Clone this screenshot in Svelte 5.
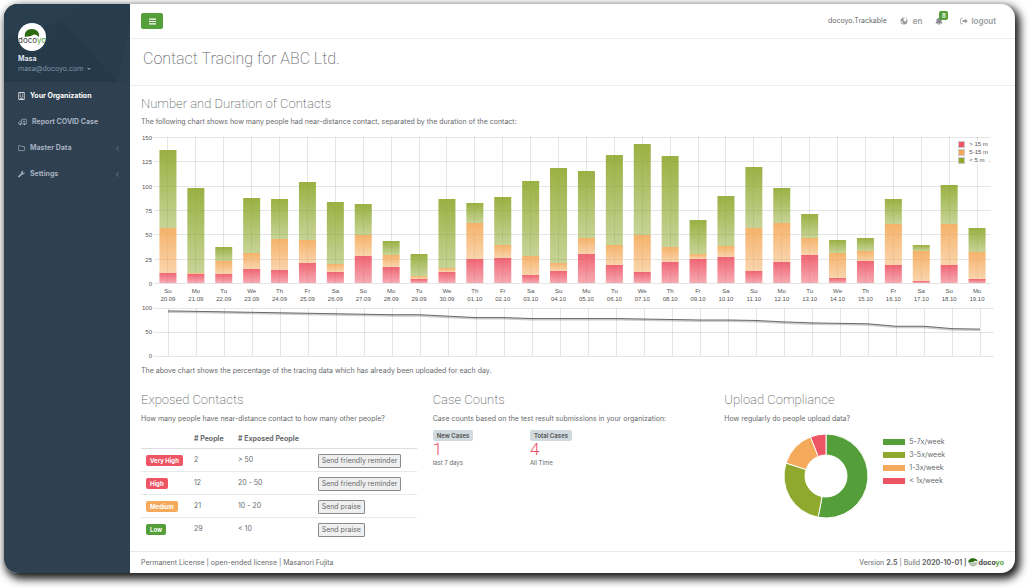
<script lang="ts">
    type Slice = { label: string, value: number, color: string };

    const days = ["Su", "Mo", "Tu", "We", "Th", "Fr", "Sa"];

    // [top of < 5 m, top of 5-15 m, top of > 15 m], one entry per day
    const contacts: number[][] = [
        [137, 56, 10], [98, 10, 9], [37, 23, 9], [87, 31, 14], [86, 45, 13],
        [104, 44, 21], [83, 20, 11], [81, 49, 28], [43, 29, 16], [30, 7, 4],
        [86, 15, 11], [82, 62, 25], [88, 39, 26], [105, 28, 8], [118, 21, 12],
        [115, 46, 30], [132, 39, 18], [143, 49, 11], [130, 37, 22], [65, 30, 25],
        [89, 38, 27], [119, 56, 12], [98, 62, 22], [71, 46, 29], [44, 31, 5],
        [46, 33, 23], [86, 61, 19], [39, 33, 2], [101, 61, 18], [56, 32, 4]
    ];

    const uploaded = [
        94, 93, 92, 91, 90, 89, 88, 87, 86, 86, 83, 80, 80, 78, 78,
        78, 78, 77, 76, 75, 75, 74, 71, 69, 68, 67, 62, 62, 57, 56
    ];

    const series = [
        { label: "< 5 m", id: "short" },
        { label: "5-15 m", id: "medium" },
        { label: "> 15 m", id: "long" }
    ];

    const exposed = [
        { level: "Very High", kind: "danger", people: 2, range: "> 50", action: "Send friendly reminder" },
        { level: "High", kind: "danger", people: 12, range: "20 - 50", action: "Send friendly reminder" },
        { level: "Medium", kind: "warning", people: 21, range: "10 - 20", action: "Send praise" },
        { level: "Low", kind: "primary", people: 29, range: "< 10", action: "Send praise" }
    ];

    const compliance: Slice[] = [
        { label: "5-7x/week", value: 53, color: "#549f39" },
        { label: "3-5x/week", value: 27, color: "#8fa82e" },
        { label: "1-3x/week", value: 14, color: "#f4aa5a" },
        { label: "< 1x/week", value: 6, color: "#ed5565" }
    ];

    let width = $state(859);

    const left = 13;
    const barWidth = 17;
    let step = $derived((width - left - 9) / contacts.length);
    let lineStep = $derived((width - left - 6) / contacts.length);

    const barY = (value: number) => 151 - Math.round(value * 146 / 150);
    const lineY = (value: number) => 53 - value * 48 / 100;
    const center = (i: number) => left + step * (i + 0.5);
    const lineX = (i: number) => left + lineStep * (i + 0.5);

    const dateLabel = (i: number) => {
        const d = new Date(2020, 8, 20 + i);
        const pad = (n: number) => String(n).padStart(2, "0");
        return pad(d.getDate()) + "." + pad(d.getMonth() + 1);
    }

    const point = (share: number, r: number) => {
        const a = share * Math.PI * 2 / 100;
        return (42 + r * Math.sin(a)) + " " + (42 - r * Math.cos(a));
    }

    const slicePath = (i: number) => {
        const from = compliance.slice(0, i).reduce((sum, s) => sum + s.value, 0);
        const to = from + compliance[i].value;
        const large = to - from > 50 ? 1 : 0;
        return `M${point(from, 42)}A42 42 0 ${large} 1 ${point(to, 42)}L${point(to, 21)}A21 21 0 ${large} 0 ${point(from, 21)}Z`;
    }
</script>

{#snippet hat()}
    <path d="M1 13C0 5 6 0 15 0s14 5 14 11c-4-4-8-4-12-1-5 3-10 1-16 3z" fill="#2c6a10" />
{/snippet}

<div class="window">
    <nav class="sidebar">
        <div class="profile">
            <svg class="facets" viewBox="0 0 125 78" preserveAspectRatio="none" aria-hidden="true">
                <path d="M0 0h80L57 17 0 36z" fill="#293e4e" />
                <path d="M57 17 112 78H30z" fill="#243949" />
                <path d="M80 0h45v62l-13 16L57 17z" fill="#273c4c" />
                <path d="M125 20v58h-13z" fill="#2a3f4f" />
            </svg>
            <svg class="avatar" viewBox="0 0 28 28" role="img" aria-label="docoyo">
                <defs><clipPath id="round"><circle cx="14" cy="14" r="14" /></clipPath></defs>
                <g clip-path="url(#round)">
                    <rect width="28" height="28" fill="#fff" />
                    <path d="M7 14C6 9 9 6 14 6s8 4 7 8c-2-2-4-3-6-2-3 2-5 1-8 2z" fill="#2c6a10" />
                    <text x="14" y="20" text-anchor="middle" class="avatar-text">doco<tspan fill="#549f39">yo</tspan></text>
                </g>
            </svg>
            <strong>Masa</strong>
            <a href="#profile">masa@docoyo.com <span class="caret"></span></a>
        </div>
        <ul>
            <li class="active">
                <a href="#organization">
                    <svg class="icon" viewBox="0 0 14 16"><path d="M1.5 1h11v14h-11zM5.5 15v-3h3v3" /><path d="M4 4h1.5M8.500 4H10M4 6.500h1.500M8.500 6.500H10M4 9h1.500M8.500 9H10" /></svg>
                    Your Organization
                </a>
            </li>
            <li>
                <a href="#report">
                    <svg class="icon wide" viewBox="0 0 20 16"><path d="M8 2h11v10H8zM8 6H4L1.500 9v3H8" /><circle cx="5" cy="13" r="2" fill="currentColor" stroke="none" /><circle cx="14.500" cy="13" r="2" fill="currentColor" stroke="none" /><path d="M13.500 4.500v5M11 7h5" /></svg>
                    Report COVID Case
                </a>
            </li>
            <li>
                <a href="#master">
                    <svg class="icon" viewBox="0 0 16 16"><path d="M1 3.500q0-1 1-1h4l1.500 2H14q1 0 1 1V13q0 1-1 1H2q-1 0-1-1z" /></svg>
                    Master Data
                    <svg class="angle" viewBox="0 0 6 10"><path d="M5 1 1 5l4 4" /></svg>
                </a>
            </li>
            <li>
                <a href="#settings">
                    <svg class="icon" viewBox="0 0 16 16"><path d="M15.500 4.200 12.800 6 10.500 4.800V2.700L13.200 1a4.600 4.600 0 0 0-6 5.600L.8 12.800a1.700 1.700 0 0 0 2.400 2.400L9.600 9a4.600 4.600 0 0 0 5.900-4.800z" fill="currentColor" stroke="none" /></svg>
                    Settings
                    <svg class="angle" viewBox="0 0 6 10"><path d="M5 1 1 5l4 4" /></svg>
                </a>
            </li>
        </ul>
    </nav>

    <div class="page">
        <header>
            <button class="toggle" aria-label="Toggle menu">
                <svg viewBox="0 0 12 12"><path d="M0 2h12M0 6h12M0 10h12" stroke="#fff" stroke-width="2" /></svg>
            </button>
            <div class="top-links">
                <span>docoyo.Trackable</span>
                <a class="lang" href="#language">
                    <svg viewBox="0 0 16 16"><circle cx="8" cy="8" r="7" fill="#999c9e" /><path d="M7 2.500 11 2l3 4-2 1-1 3-2-2-2-2zM2 8l3 1.500L6.500 13 4 12.500z" fill="#fff" /></svg>
                    en
                </a>
                <a class="bell" href="#notifications" aria-label="Notifications">
                    <svg viewBox="0 0 16 16"><path d="M8 1c1 0 1 1 1 1 3 .6 4 3 4 5 0 3 1 4.500 2.500 6H.5C2 11.500 3 10 3 7c0-2 1-4.400 4-5 0 0 0-1 1-1zM6 13.500h4a2 2 0 0 1-4 0z" fill="#8a8d90" /></svg>
                    <span class="count">8</span>
                </a>
                <a class="logout" href="#logout">
                    <svg viewBox="0 0 16 16"><path d="M6 2.500H3q-2 0-2 2v7q0 2 2 2h3" fill="none" stroke="#999c9e" stroke-width="1.500" /><path d="M5 6h5V3l5.500 5-5.500 5v-3H5z" fill="#999c9e" /></svg>
                    logout
                </a>
            </div>
        </header>

        <div class="heading">
            <h1>Contact Tracing for ABC Ltd.</h1>
        </div>

        <main>
            <section>
                <h2>Number and Duration of Contacts</h2>
                <p>The following chart shows how many people had near-distance contact, separated by the duration of the contact:</p>

                <div class="charts" bind:clientWidth={width}>
                    <svg width={width} height="171" role="img" aria-label="Contacts per day">
                        <defs>
                            <linearGradient id="short" x2="0" y2="1"><stop stop-color="#8fa82e" stop-opacity="0.9" /><stop offset="1" stop-color="#8fa82e" stop-opacity="0.5" /></linearGradient>
                            <linearGradient id="medium" x2="0" y2="1"><stop stop-color="#f4aa5a" stop-opacity="0.9" /><stop offset="1" stop-color="#f4aa5a" stop-opacity="0.5" /></linearGradient>
                            <linearGradient id="long" x2="0" y2="1"><stop stop-color="#ed5565" stop-opacity="0.9" /><stop offset="1" stop-color="#ed5565" stop-opacity="0.5" /></linearGradient>
                        </defs>
                        {#each [0, 25, 50, 75, 100, 125, 150] as tick}
                            <line class="grid" x1={left} x2={width - 9} y1={barY(tick)} y2={barY(tick)} />
                            <text class="tick" x="11" y={barY(tick) + 3} text-anchor="end">{tick}</text>
                        {/each}
                        {#each contacts as tops, i}
                            <line class="grid" x1={center(i)} x2={center(i)} y1="5" y2="151" />
                            {#each series as s, k}
                                <rect
                                    x={center(i) - barWidth / 2}
                                    y={barY(tops[k])}
                                    width={barWidth}
                                    height={barY(tops[k + 1] ?? 0) - barY(tops[k])}
                                    fill="url(#{s.id})" />
                            {/each}
                            <text class="tick" x={center(i)} y="161" text-anchor="middle">{days[i % 7]}</text>
                            <text class="tick" x={center(i)} y="169" text-anchor="middle">{dateLabel(i)}</text>
                        {/each}
                    </svg>

                    <ul class="legend">
                        {#each [...series].reverse() as s}
                            <li><span class="swatch {s.id}"></span>{s.label}</li>
                        {/each}
                    </ul>

                    <svg width={width} height="58" role="img" aria-label="Uploaded tracing data in percent">
                        {#each [0, 50, 100] as tick}
                            <line class="grid" x1={left} x2={width - 6} y1={lineY(tick)} y2={lineY(tick)} />
                            <text class="tick" x="11" y={lineY(tick) + 2} text-anchor="end">{tick}</text>
                        {/each}
                        {#each uploaded as _, i}
                            <line class="grid" x1={lineX(i)} x2={lineX(i)} y1="5" y2="53" />
                        {/each}
                        <polyline class="shade" points={uploaded.map((v, i) => lineX(i) + "," + (lineY(v) + 1)).join(" ")} />
                        <polyline class="line" points={uploaded.map((v, i) => lineX(i) + "," + lineY(v)).join(" ")} />
                    </svg>
                </div>

                <p>The above chart shows the percentage of the tracing data which has already been uploaded for each day.</p>
            </section>

            <div class="columns">
                <section>
                    <h2>Exposed Contacts</h2>
                    <p>How many people have near-distance contact to how many other people?</p>
                    <table>
                        <thead>
                            <tr><th class="level" aria-label="Level"></th><th class="people"># People</th><th># Exposed People</th><th aria-label="Action"></th></tr>
                        </thead>
                        <tbody>
                            {#each exposed as row}
                                <tr>
                                    <td><span class="label {row.kind}">{row.level}</span></td>
                                    <td>{row.people}</td>
                                    <td>{row.range}</td>
                                    <td class="action"><button>{row.action}</button></td>
                                </tr>
                            {/each}
                        </tbody>
                    </table>
                </section>

                <section>
                    <h2>Case Counts</h2>
                    <p>Case counts based on the test result submissions in your organization:</p>
                    <div class="cases">
                        <div>
                            <span class="label plain">New Cases</span>
                            <div class="number">1</div>
                            <small>last 7 days</small>
                        </div>
                        <div>
                            <span class="label plain">Total Cases</span>
                            <div class="number">4</div>
                            <small>All Time</small>
                        </div>
                    </div>
                </section>

                <section>
                    <h2>Upload Compliance</h2>
                    <p>How regularly do people upload data?</p>
                    <div class="compliance">
                        <svg viewBox="0 0 84 84" role="img" aria-label="Upload compliance">
                            {#each compliance as slice, i}
                                <path d={slicePath(i)} fill={slice.color} stroke="#fff" />
                            {/each}
                        </svg>
                        <ul>
                            {#each compliance as slice}
                                <li><span style="background-color: {slice.color}"></span>{slice.label}</li>
                            {/each}
                        </ul>
                    </div>
                </section>
            </div>
        </main>

        <footer>
            <span>Permanent License | open-ended license | Masanori Fujita</span>
            <span class="version">
                <span>Version <b>2.5</b> | Build <b>2020-10-01 |</b></span>
                <svg viewBox="0 0 30 26" aria-hidden="true">
                    <path d="M2 12h27q0 6-5 10-9 6-17 0-4-3-5-10z" fill="#b9c2b0" />
                    {@render hat()}
                </svg>
                <b class="brand">doco<i>yo</i></b>
            </span>
        </footer>
    </div>
</div>

<style>
    :global(body) {
        margin: 0;
        background: #fff;
    }

    .window {
        display: flex;
        min-height: calc(100vh - 19px);
        margin: 4px 15px 15px 4px;
        border-radius: 14px;
        overflow: hidden;
        box-shadow: 3px 4px 8px 2px rgba(0, 0, 0, 0.9);
        background: #fff;
        color: #676a6c;
        font: 7px/10px Inter, "Liberation Sans", sans-serif;
    }

    a {
        color: inherit;
        text-decoration: none;
    }

    ul {
        margin: 0;
        padding: 0;
        list-style: none;
    }

    .sidebar {
        flex: none;
        width: 126px;
        background: #2f4050;
        color: #a7b1c2;
    }

    .sidebar ul {
        padding-top: 1px;
    }

    .profile {
        position: relative;
        display: flex;
        flex-direction: column;
        align-items: flex-start;
        box-sizing: border-box;
        height: 78px;
        padding: 19px 14px 0;
        background: #263b4a;
        color: #8095a8;
    }

    .profile > * {
        position: relative;
    }

    .profile .facets {
        position: absolute;
        inset: 0;
        width: 100%;
        height: 100%;
    }

    .avatar {
        width: 28px;
        height: 28px;
        margin-bottom: 3px;
    }

    .avatar-text {
        font-size: 8px;
        fill: #444;
    }

    .profile strong {
        color: #dfe4ed;
    }

    .caret {
        display: inline-block;
        margin-left: 2px;
        border: 2px solid transparent;
        border-top-color: currentColor;
        border-bottom: 0;
        vertical-align: middle;
    }

    .sidebar li a {
        display: flex;
        align-items: center;
        gap: 5px;
        height: 26px;
        padding: 0 11px 0 14px;
        font-weight: 700;
    }

    .sidebar .active {
        color: #fff;
    }

    .icon {
        width: 7px;
        height: 8px;
        fill: none;
        stroke: currentColor;
        stroke-width: 1.5;
    }

    .icon.wide {
        width: 9px;
    }

    .angle {
        width: 3px;
        height: 5px;
        margin-left: auto;
        fill: none;
        stroke: currentColor;
    }

    .page {
        display: flex;
        flex: 1;
        flex-direction: column;
        min-width: 0;
    }

    header {
        display: flex;
        align-items: center;
        justify-content: space-between;
        height: 34px;
        padding: 0 19px 0 11px;
        border-bottom: 1px solid #eceeef;
    }

    .toggle {
        width: 22px;
        height: 16px;
        padding: 0;
        border: 0;
        border-radius: 2px;
        background: #549f39;
        line-height: 0;
    }

    .toggle svg {
        width: 7px;
        height: 7px;
    }

    .top-links,
    .top-links a {
        display: flex;
        align-items: center;
    }

    .top-links {
        gap: 13px;
    }

    .top-links a {
        gap: 5px;
        color: #999c9e;
        font-size: 8px;
        font-weight: 600;
    }

    .top-links svg {
        width: 8px;
        height: 8px;
    }

    .top-links .bell {
        position: relative;
        margin-right: 4px;
    }

    .top-links .logout {
        gap: 3px;
    }

    .count {
        position: absolute;
        top: -6px;
        left: 4px;
        width: 9px;
        border-radius: 2px;
        background: #549f39;
        color: #fff;
        font-size: 6px;
        line-height: 9px;
        text-align: center;
    }

    .heading {
        padding: 8px 13px 14px;
        border-bottom: 1px solid #eceeef;
    }

    h1,
    h2 {
        margin: 0;
        font-family: Roboto, "Liberation Sans", sans-serif;
        font-weight: 200;
    }

    h1 {
        font-size: 16px;
        line-height: 24px;
    }

    h2 {
        font-size: 13px;
        line-height: 16px;
    }

    p {
        margin: 5px 0;
    }

    main {
        flex: 1;
        padding: 10px 15px 10px 11px;
    }

    .charts {
        position: relative;
    }

    .charts svg {
        display: block;
    }

    .grid {
        stroke: rgba(0, 0, 0, 0.1);
        shape-rendering: crispEdges;
    }

    .tick,
    .legend {
        font-family: "Liberation Sans", Arial, sans-serif;
        font-size: 6px;
    }

    .tick {
        fill: #545454;
    }

    .line,
    .shade {
        fill: none;
        stroke: #676a6c;
    }

    .shade {
        stroke: rgba(0, 0, 0, 0.2);
        stroke-width: 2;
    }

    .legend {
        position: absolute;
        top: 8px;
        right: 12px;
        background: rgba(255, 255, 255, 0.85);
        color: #545454;
        line-height: 8px;
    }

    .legend li {
        display: flex;
        align-items: center;
        gap: 4px;
    }

    .swatch {
        width: 5px;
        height: 5px;
        border: 1px solid #ccc;
    }

    .swatch.long {
        background: #ed5565;
    }

    .swatch.medium {
        background: #f4aa5a;
    }

    .swatch.short {
        background: #8fa82e;
    }

    .columns {
        display: grid;
        grid-template-columns: repeat(3, minmax(0, 1fr));
        gap: 16px;
        margin-top: 16px;
    }

    .columns p {
        margin-top: 6px;
    }

    table {
        width: 100%;
        border-collapse: collapse;
    }

    th,
    td {
        padding: 0 5px;
        text-align: left;
    }

    th {
        height: 19px;
        border-bottom: 1px solid #ddd;
        font-weight: 700;
    }

    th.level {
        width: 38px;
    }

    th.people {
        width: 34px;
    }

    td {
        height: 22px;
    }

    tbody tr + tr td {
        border-top: 1px solid #e7eaec;
    }

    .label {
        display: block;
        width: fit-content;
        padding: 0 4px;
        border-radius: 2px;
        color: #fff;
        font-size: 6px;
        font-weight: 700;
        line-height: 11px;
    }

    .danger {
        background: #ed5565;
    }

    .warning {
        background: #f4aa5a;
    }

    .primary {
        background: #549f39;
    }

    .plain {
        background: #d1dade;
        color: #5e5e5e;
    }

    .action {
        width: 94px;
        padding-top: 2px;
        height: 20px;
    }

    td button {
        display: block;
        padding: 1px 3px;
        border: 1px solid #8a8a8a;
        border-radius: 1px;
        background: #efefef;
        color: inherit;
        font: inherit;
    }

    .cases {
        display: grid;
        grid-template-columns: 1fr 1fr 1fr;
        gap: 16px;
        margin-top: 6px;
    }

    .number {
        color: #ed5565;
        font: 300 17px/17px Roboto, "Liberation Sans", sans-serif;
    }

    small {
        font-size: 6px;
    }

    .compliance {
        display: flex;
        gap: 15px;
        padding: 5px 0 0 60px;
    }

    .compliance svg {
        width: 84px;
        height: 84px;
    }

    .compliance ul {
        display: grid;
        align-content: start;
        gap: 3px;
        padding-top: 3px;
    }

    .compliance li {
        display: flex;
        align-items: center;
        gap: 4px;
    }

    .compliance li span {
        width: 22px;
        height: 6px;
    }

    footer {
        display: flex;
        align-items: center;
        justify-content: space-between;
        height: 21px;
        padding: 0 11px;
        border-top: 1px solid #e7eaec;
    }

    .version {
        display: flex;
        align-items: center;
        gap: 1px;
    }

    .version svg {
        width: 10px;
        height: 9px;
    }

    .brand {
        color: #444;
    }

    .brand i {
        color: #549f39;
        font-style: normal;
    }
</style>
